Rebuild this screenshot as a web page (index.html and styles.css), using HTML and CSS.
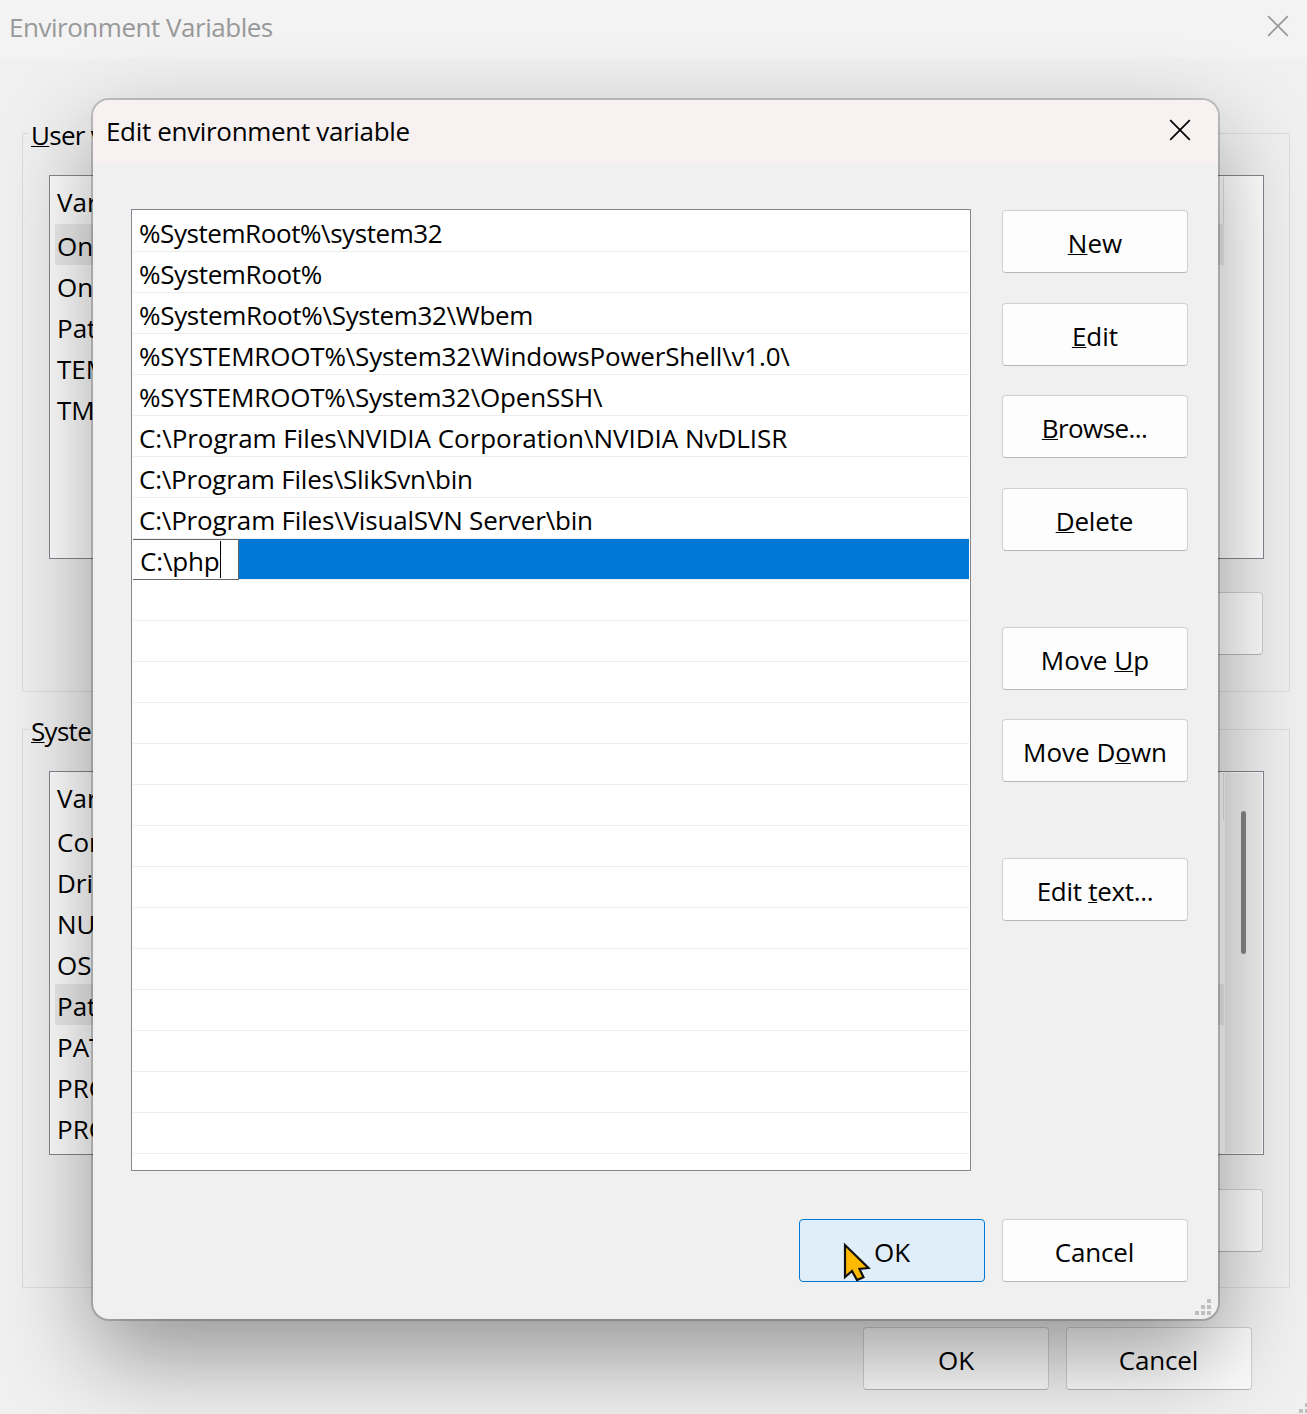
FILE: index.html
```html
<!DOCTYPE html>
<html lang="en">
<head>
<meta charset="utf-8">
<title>Environment Variables</title>
<link rel="stylesheet" href="styles.css">
</head>
<body>
<main class="window">
  <header class="window-title">
    <span class="t-env">Environment Variables</span>
    <svg class="close" width="22" height="22" viewBox="0 0 22 22"><path d="M1.2 1.2 20.8 20.8M20.8 1.2 1.2 20.8"/></svg>
  </header>

  <section class="group">
    <h2 class="legend"><u>U</u>ser v</h2>
    <div class="vars">
      <div class="vars-head">Var</div>
      <div class="var selected">On</div>
      <div class="var">On</div>
      <div class="var">Pat</div>
      <div class="var">TEM</div>
      <div class="var">TM</div>
    </div>
    <div class="group-actions"><span class="btn"></span></div>
  </section>

  <section class="group">
    <h2 class="legend"><u>S</u>yste</h2>
    <div class="vars scrolls">
      <div class="vars-head">Var</div>
      <div class="var">Com</div>
      <div class="var">Driv</div>
      <div class="var">NU</div>
      <div class="var">OS</div>
      <div class="var selected">Pat</div>
      <div class="var">PAT</div>
      <div class="var">PRO</div>
      <div class="var">PRO</div>
      <div class="scrollbar"><div class="thumb"></div></div>
    </div>
    <div class="group-actions"><span class="btn"></span></div>
  </section>

  <footer class="window-actions">
    <button class="btn">OK</button>
    <button class="btn b-cancel">Cancel</button>
  </footer>
  <svg class="grip window-grip" width="16" height="16" viewBox="0 0 16 16"><path d="M12 0h4v4h-4zM6 6h4v4H6zM12 6h4v4h-4zM0 12h4v4H0zM6 12h4v4H6zM12 12h4v4h-4z"/></svg>
</main>

<div class="dialog" role="dialog">
  <header class="dialog-title">
    <span class="t-edit">Edit environment variable</span>
    <svg class="close" width="22" height="22" viewBox="0 0 22 22"><path d="M1.2 1.2 20.8 20.8M20.8 1.2 1.2 20.8"/></svg>
  </header>
  <div class="dialog-body">
    <div class="paths">
      <div class="path"><span class="p1">%SystemRoot%\system32</span></div>
      <div class="path"><span class="p2">%SystemRoot%</span></div>
      <div class="path"><span class="p3">%SystemRoot%\System32\Wbem</span></div>
      <div class="path"><span class="p4">%SYSTEMROOT%\System32\WindowsPowerShell\v1.0\</span></div>
      <div class="path"><span class="p5">%SYSTEMROOT%\System32\OpenSSH\</span></div>
      <div class="path"><span class="p6">C:\Program Files\NVIDIA Corporation\NVIDIA NvDLISR</span></div>
      <div class="path"><span class="p7">C:\Program Files\SlikSvn\bin</span></div>
      <div class="path"><span class="p8">C:\Program Files\VisualSVN Server\bin</span></div>
      <div class="path active"><div class="editor"><span class="p9">C:\php</span><i class="caret"></i></div></div>
      <div class="path"></div>
      <div class="path"></div>
      <div class="path"></div>
      <div class="path"></div>
      <div class="path"></div>
      <div class="path"></div>
      <div class="path"></div>
      <div class="path"></div>
      <div class="path"></div>
      <div class="path"></div>
      <div class="path"></div>
      <div class="path"></div>
      <div class="path"></div>
      <div class="path"></div>
    </div>
    <div class="commands">
      <button class="btn b-new"><span><u>N</u>ew</span></button>
      <button class="btn b-edit"><span><u>E</u>dit</span></button>
      <button class="btn b-browse"><span><u>B</u>rowse...</span></button>
      <button class="btn b-delete"><span><u>D</u>elete</span></button>
      <button class="btn b-up"><span>Move <u>U</u>p</span></button>
      <button class="btn b-down"><span>Move D<u>o</u>wn</span></button>
      <button class="btn b-text"><span>Edit <u>t</u>ext...</span></button>
    </div>
  </div>
  <footer class="dialog-actions">
    <button class="btn hot">OK</button>
    <button class="btn b-cancel">Cancel</button>
  </footer>
  <svg class="grip dialog-grip" width="16" height="16" viewBox="0 0 16 16"><path d="M12 0h4v4h-4zM6 6h4v4H6zM12 6h4v4h-4zM0 12h4v4H0zM6 12h4v4H6zM12 12h4v4h-4z"/></svg>
</div>

<svg class="pointer" width="30" height="42" viewBox="0 0 30 42"><path d="M2 4V36L9 30L14 39L20.500 36.300L16.500 28L25.500 27Z"/></svg>
</body>
</html>
```
FILE: styles.css
```css
* { box-sizing: border-box; }
body {
  margin: 0;
  width: 1307px;
  height: 1414px;
  position: relative;
  overflow: hidden;
  background: #f0f0f0;
  color: #000;
  font: 26px/41px "Open Sans", "Noto Sans", sans-serif;
}
u {
  text-decoration-thickness: 1px;
  text-underline-offset: 1px;
  text-decoration-skip-ink: none;
}
svg { display: block; flex: none; }
.close { fill: none; stroke: #000; stroke-width: 1.7; }

.btn {
  width: 186px;
  height: 63px;
  flex: none;
  display: flex;
  align-items: center;
  justify-content: center;
  padding: 3px 0 0;
  border: 1px solid #d0d0d0;
  border-bottom-color: #b8b8b8;
  border-radius: 4px;
  background: #fdfdfd;
  color: #000;
  font: inherit;
}
.btn.hot { background: #e0eef9; border-color: #0078d4; }

/* Parent window */
.window { height: 1414px; display: flex; flex-direction: column; }
.window-title {
  height: 59px;
  flex: none;
  display: flex;
  justify-content: space-between;
  padding: 7px 18px 0 9px;
  background: #f3f3f3;
  color: #999;
}
.window-title .close { stroke: #999; margin-top: 8px; }
.t-env { letter-spacing: -.48px; }
.group {
  height: 559px;
  flex: none;
  margin: 74px 17px 0 22px;
  border: 1px solid #dcdcdc;
  padding: 0 25px 0 26px;
}
.group + .group { margin-top: 37px; }
.legend {
  width: 80px;
  height: 41px;
  margin: -19px 0 19px -20px;
  padding-left: 2px;
  background: #f0f0f0;
  font: inherit;
  letter-spacing: -.7px;
  white-space: nowrap;
}
.vars {
  position: relative;
  height: 384px;
  border: 1px solid #828790;
  background: #fff;
  padding: 1px 39px 0 5px;
}
.vars-head { height: 47px; padding: 5px 0 0 2px; border-right: 1px solid #e0e0e0; }
.var { height: 41px; line-height: 44px; padding-left: 2px; }
.var.selected { background: #ededed; }
.scrollbar {
  position: absolute;
  top: 1px;
  right: 1px;
  bottom: 1px;
  width: 37px;
  padding: 38px 0 0 16px;
  background: #f0f0f0;
}
.thumb { width: 5px; height: 143px; border-radius: 3px; background: #858585; }
.group-actions { display: flex; justify-content: flex-end; padding: 33px 1px 0 0; }
.group + .group .group-actions { padding-top: 34px; }
.window-actions { display: flex; justify-content: flex-end; gap: 17px; padding: 39px 55px 0 0; }

/* Editing dialog */
.dialog {
  position: absolute;
  left: 93px;
  top: 100px;
  width: 1125px;
  height: 1219px;
  border-radius: 16px;
  background: #f0f0f0;
  box-shadow: 0 0 0 2px rgba(0, 0, 0, .19), 0 37px 92px rgba(0, 0, 0, .38);
}
.dialog-title {
  height: 63px;
  display: flex;
  justify-content: space-between;
  padding: 11px 27px 0 13px;
  border-radius: 16px 16px 0 0;
  background: #f7f1f1;
}
.dialog-title .close { margin-top: 8px; }
.t-edit { letter-spacing: -.33px; }
.dialog-body { display: flex; gap: 31px; padding: 46px 0 0 38px; }
.paths {
  width: 840px;
  height: 962px;
  border: 1px solid #828790;
  background: #fff;
  padding: 1px;
}
.path {
  height: 41px;
  line-height: 44px;
  padding-left: 6px;
  border-bottom: 1px solid #ededed;
  white-space: nowrap;
}
.p1 { letter-spacing: -.43px; }
.p2 { letter-spacing: -.36px; }
.p3 { letter-spacing: -.31px; }
.p4 { letter-spacing: -.19px; }
.p5 { letter-spacing: -.2px; }
.p6 { letter-spacing: -.03px; }
.p7 { letter-spacing: -.22px; }
.p8 { letter-spacing: -.19px; }
.p9 { letter-spacing: -.15px; }
.path.active { background: #0078d7 content-box; padding: 0; }
.editor {
  display: flex;
  width: 106px;
  height: 41px;
  border: solid #666;
  border-width: 1px 1px 1px 0;
  background: #fff;
  padding-left: 7px;
  line-height: 43px;
}
.caret { width: 1px; height: 37px; margin-top: 1px; background: #000; }
.commands { display: flex; flex-direction: column; padding-top: 1px; }
.b-edit, .b-delete { margin-top: 30px; }
.b-browse, .b-down { margin-top: 29px; }
.b-up, .b-text { margin-top: 76px; }
.b-browse { letter-spacing: -.6px; padding-right: 1px; }
.b-text { letter-spacing: -.3px; }
.b-delete, .b-cancel { letter-spacing: -.15px; padding-right: 1px; }
.dialog-actions { display: flex; justify-content: flex-end; gap: 17px; padding: 48px 30px 0 0; }

.grip { position: absolute; fill: #bfbfbf; }
.dialog-grip { right: 7px; bottom: 4px; }
.window-grip { left: 1299px; top: 1397px; }

.pointer {
  position: absolute;
  left: 843px;
  top: 1241px;
  fill: #ffb900;
  stroke: #111;
  stroke-width: 2.2;
}
```
